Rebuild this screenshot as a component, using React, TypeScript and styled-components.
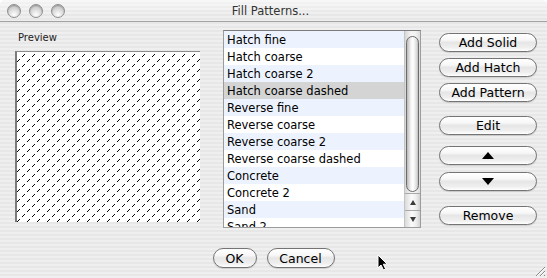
import React from 'react';
import styled, { createGlobalStyle } from 'styled-components';

const GlobalStyle = createGlobalStyle`
  html, body {
    margin: 0;
    padding: 0;
    background: #ffffff;
  }
  body {
    width: 547px;
    height: 278px;
    overflow: hidden;
    font-family: "DejaVu Sans", "Liberation Sans", sans-serif;
  }
`;

const pinstripe =
  'repeating-linear-gradient(to bottom, #efefef 0px, #efefef 2px, #e7e7e7 2px, #e7e7e7 4px)';

const patterns = [
  'Hatch fine',
  'Hatch coarse',
  'Hatch coarse 2',
  'Hatch coarse dashed',
  'Reverse fine',
  'Reverse coarse',
  'Reverse coarse 2',
  'Reverse coarse dashed',
  'Concrete',
  'Concrete 2',
  'Sand',
  'Sand 2',
];

const selectedIndex = 3;

// pixels of one 10x10 tile of the dashed hatch: a "/" line, 3 on, 2 off
const hatchPixels = [0, 1, 2, 5, 6, 7];

const App: React.FC = () => {
  return (
    <>
      <GlobalStyle />
      <Window>
        <TitleBar>
          <Lights>
            <Light />
            <Light />
            <Light />
          </Lights>
          <Title>Fill Patterns...</Title>
          <span />
        </TitleBar>

        <Body>
          <MainRow>
            <PreviewPane>
              <PaneLabel>Preview</PaneLabel>
              <PreviewBox>
                <svg width="100%" height="100%" shapeRendering="crispEdges">
                  <defs>
                    <pattern id="hatch" width="10" height="10" patternUnits="userSpaceOnUse">
                      {hatchPixels.map((x) => (
                        <rect key={x} x={x} y={9 - x} width="1" height="1" fill="#000" />
                      ))}
                    </pattern>
                  </defs>
                  <rect width="100%" height="100%" fill="url(#hatch)" />
                </svg>
              </PreviewBox>
            </PreviewPane>

            <ListBox>
              <Rows>
                {patterns.map((name, i) => (
                  <Row
                    key={name}
                    $tone={i === selectedIndex ? 'selected' : i % 2 === 0 ? 'blue' : 'white'}
                  >
                    {name}
                  </Row>
                ))}
              </Rows>
              <ScrollBar>
                <Track>
                  <Thumb />
                </Track>
                <ScrollArrow>
                  <Triangle $dir="up" />
                </ScrollArrow>
                <ScrollArrow>
                  <Triangle $dir="down" />
                </ScrollArrow>
              </ScrollBar>
            </ListBox>

            <ButtonColumn>
              <PushButton>Add Solid</PushButton>
              <PushButton $gap={6}>Add Hatch</PushButton>
              <PushButton $gap={6}>Add Pattern</PushButton>
              <PushButton $gap={14}>Edit</PushButton>
              <PushButton $gap={11}>
                <Triangle $dir="up" $big />
              </PushButton>
              <PushButton $gap={7}>
                <Triangle $dir="down" $big />
              </PushButton>
              <PushButton $gap={15}>Remove</PushButton>
            </ButtonColumn>
          </MainRow>

          <Footer>
            <FooterButton $width={44}>OK</FooterButton>
            <FooterButton $width={68}>Cancel</FooterButton>
          </Footer>
        </Body>

        <Cursor width="12" height="17" viewBox="0 0 12 17">
          <path
            d="M1 1 L1 14 L4 11 L6.5 16 L8.6 15 L6.3 10.2 L10.2 10.2 Z"
            fill="#000"
            stroke="#fff"
            strokeWidth="1"
            strokeLinejoin="round"
          />
        </Cursor>

        <Grip width="13" height="13" viewBox="0 0 13 13">
          <path d="M12 3 L3 12 M12 7 L7 12 M12 11 L11 12" stroke="#8a8a8a" strokeWidth="1" />
          <path d="M12 4 L4 12 M12 8 L8 12" stroke="#ffffff" strokeWidth="1" />
        </Grip>
      </Window>
    </>
  );
};

const Window = styled.div`
  position: relative;
  width: 547px;
  height: 278px;
  display: flex;
  flex-direction: column;
  background: ${pinstripe};
  border-radius: 6px 6px 0 0;
  overflow: hidden;
`;

const TitleBar = styled.div`
  height: 21px;
  display: grid;
  grid-template-columns: 1fr auto 1fr;
  align-items: center;
  border-bottom: 1px solid #a2a2a2;
  background: linear-gradient(to bottom, rgba(255, 255, 255, 0.55), rgba(255, 255, 255, 0) 70%),
    ${pinstripe};
`;

const Lights = styled.div`
  display: flex;
  gap: 8px;
  padding-left: 7px;
`;

const Light = styled.span`
  width: 12px;
  height: 12px;
  border-radius: 50%;
  border: 1px solid #8e8e8e;
  background: radial-gradient(circle at 50% 80%, #ffffff 0%, #dcdcdc 45%, #b0b0b0 100%);
  box-shadow: inset 0 1px 1px rgba(0, 0, 0, 0.2);
`;

const Title = styled.div`
  font-size: 11.5px;
  color: #333;
  padding-right: 6px;
`;

const Body = styled.div`
  flex: 1;
  display: flex;
  flex-direction: column;
  padding: 8px 10px 0 15px;
`;

const MainRow = styled.div`
  display: flex;
  align-items: flex-start;
`;

const PreviewPane = styled.div`
  width: 185px;
  padding-top: 1px;
`;

const PaneLabel = styled.div`
  font-size: 10px;
  line-height: 14px;
  color: #222;
  padding-left: 3px;
  margin-bottom: 6px;
  padding-top: 1px;
  margin-top: -1px;
`;

const PreviewBox = styled.div`
  box-sizing: border-box;
  height: 171px;
  background: #ffffff;
  border-top: 1px solid #8c8c8c;
  border-left: 2px solid #7a7a7a;
  overflow: hidden;

  svg {
    display: block;
  }
`;

const ListBox = styled.div`
  box-sizing: border-box;
  width: 198px;
  height: 198px;
  margin-left: 23px;
  display: flex;
  background: #ffffff;
  border: 1px solid #9c9c9c;
  border-top-color: #7c7c7c;
  overflow: hidden;
`;

const Rows = styled.div`
  flex: 1;
  overflow: hidden;
`;

const Row = styled.div<{ $tone: 'blue' | 'white' | 'selected' }>`
  box-sizing: border-box;
  height: 17px;
  padding: 2px 0 0 3px;
  line-height: 15px;
  font-size: 11.5px;
  color: #000;
  white-space: nowrap;
  background: ${(p) =>
    p.$tone === 'selected' ? '#d4d4d4' : p.$tone === 'blue' ? '#edf3fe' : '#ffffff'};
`;

const ScrollBar = styled.div`
  width: 15px;
  display: flex;
  flex-direction: column;
  border-left: 1px solid #c4c4c4;
`;

const Track = styled.div`
  flex: 1;
  padding: 5px 1px 0;
  background: linear-gradient(to right, #d6d6d6, #f6f6f6 40%, #f2f2f2 70%, #dcdcdc);
`;

const Thumb = styled.div`
  box-sizing: border-box;
  height: 156px;
  border-radius: 7px;
  border: 1px solid #6c6c6c;
  background: linear-gradient(to right, #b9b9b9, #f4f4f4 35%, #ffffff 55%, #dedede 85%, #bdbdbd);
`;

const ScrollArrow = styled.div`
  height: 16px;
  display: flex;
  align-items: center;
  justify-content: center;
  border-top: 1px solid #a9a9a9;
  background: linear-gradient(to right, #dadada, #fbfbfb 45%, #ededed 75%, #d2d2d2);
`;

const Triangle = styled.span<{ $dir: 'up' | 'down'; $big?: boolean }>`
  width: 0;
  height: 0;
  border-left: ${(p) => (p.$big ? 6.5 : 3.5)}px solid transparent;
  border-right: ${(p) => (p.$big ? 6.5 : 3.5)}px solid transparent;
  ${(p) => (p.$dir === 'up' ? 'border-bottom' : 'border-top')}: ${(p) => (p.$big ? 7 : 5)}px solid
    ${(p) => (p.$big ? '#000' : '#3c3c3c')};
`;

const ButtonColumn = styled.div`
  width: 98px;
  margin-left: 18px;
  margin-top: 3px;
  display: flex;
  flex-direction: column;
`;

const aquaButton = `
  box-sizing: border-box;
  display: flex;
  align-items: center;
  justify-content: center;
  padding: 0;
  font-family: "DejaVu Sans", "Liberation Sans", sans-serif;
  font-size: 12.5px;
  color: #000;
  border: 1px solid #747474;
  border-radius: 10px;
  background: linear-gradient(
    to bottom,
    #ffffff 0%,
    #f7f7f7 35%,
    #e6e6e6 50%,
    #efefef 80%,
    #ffffff 100%
  );
  box-shadow: 0 1px 1px rgba(0, 0, 0, 0.14);
`;

const PushButton = styled.button<{ $gap?: number }>`
  ${aquaButton}
  width: 100%;
  height: 19px;
  margin-top: ${(p) => p.$gap ?? 0}px;
`;

const Footer = styled.div`
  display: flex;
  justify-content: center;
  gap: 10px;
  margin-top: 20px;
  padding-right: 5px;
`;

const FooterButton = styled.button<{ $width: number }>`
  ${aquaButton}
  width: ${(p) => p.$width}px;
  height: 20px;
`;

const Cursor = styled.svg`
  position: absolute;
  left: 377px;
  top: 254px;
`;

const Grip = styled.svg`
  position: absolute;
  right: 1px;
  bottom: 1px;
`;

export default App;
